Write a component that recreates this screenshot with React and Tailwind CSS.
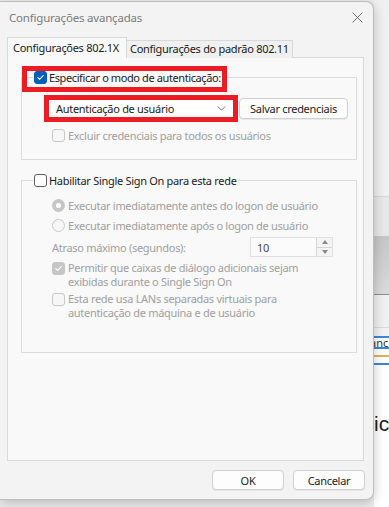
import { useState } from 'react'

const FONT = "font-['Noto_Sans','Open_Sans',sans-serif]"

export default function App() {
  const [auth, setAuth] = useState(true)
  const [sso, setSso] = useState(false)

  return (
    <div className={`relative w-[389px] h-[507px] overflow-hidden bg-[#ededed] flex items-start ${FONT} text-[11px] leading-[13px] tracking-[-0.3px] text-[#1b1b1b]`}>
      {/* Dialog */}
      <div className="mt-px w-[374px] h-[499px] shrink-0 flex flex-col bg-[#f3f3f3] border border-l-0 border-[#bdbdbd] rounded-r-[8px] shadow-[0_3px_12px_rgba(0,0,0,0.22)] relative z-10">
        {/* Title bar */}
        <div className="h-[35px] flex items-start pt-[9px] pl-[9px] pr-[10px] justify-between">
          <span className="text-[11.5px] tracking-[-0.2px] text-[#7b7b7b] leading-[14px]">Configurações avançadas</span>
          <svg viewBox="0 0 10 10" className="w-[11px] h-[11px] mt-px" fill="none" stroke="#6e6e6e" strokeWidth="0.9">
            <path d="M0.5 0.5l9 9M9.5 0.5l-9 9" />
          </svg>
        </div>

        {/* Tabs */}
        <div className="pl-[7px] flex items-end h-[21px] -mb-px relative z-10 whitespace-nowrap">
          <div className="w-[120px] h-[21px] bg-[#f9f9f9] border border-b-0 border-[#d9d9d9] pl-[5px] pt-[3px]">
            Configurações 802.1X
          </div>
          <div className="w-[166px] h-[18px] bg-[#f0f0f0] border border-l-0 border-b-0 border-[#d9d9d9] pl-[3px] pt-[1px]">
            Configurações do padrão 802.11
          </div>
        </div>

        {/* Panel */}
        <div className="ml-[7px] w-[357px] h-[404px] bg-[#f9f9f9] border border-[#dadada] pl-[13px] whitespace-nowrap">
          {/* Group 1 */}
          <fieldset className="mt-[12px] w-[336px] border border-[#dcdcdc] pb-[17px]">
            <legend className="ml-[11px] px-px h-[14px] flex items-center gap-[2px] pr-[2px]">
              <Check checked={auth} onClick={() => setAuth(!auth)} />
              <span className="tracking-[-0.4px]">Especificar o modo de autenticação:</span>
            </legend>
            <div className="mt-[14px] ml-[27px] h-[21px] flex items-center">
              <div className="w-[184px] h-[18px] bg-white flex items-center justify-between pl-[7px] pr-[7px]">
                <span>Autenticação de usuário</span>
                <svg viewBox="0 0 10 6" className="w-[9px] h-[5px]" fill="none" stroke="#555" strokeWidth="1">
                  <path d="M0.5 0.5l4.5 4.5 4.5-4.5" />
                </svg>
              </div>
              <Button className="ml-[6px] w-[109px] h-[21px]">Salvar credenciais</Button>
            </div>
            <div className="mt-[10px] ml-[30px] flex items-center gap-[3px]">
              <Check disabled />
              <span className="text-[#a0a0a0]">Excluir credenciais para todos os usuários</span>
            </div>
          </fieldset>

          {/* Group 2 */}
          <fieldset className="mt-[13px] w-[336px] border border-[#dcdcdc] pb-[32px]">
            <legend className="ml-[11px] px-px h-[14px] flex items-center gap-[2px] pr-[2px]">
              <Check checked={sso} onClick={() => setSso(!sso)} />
              <span>Habilitar Single Sign On para esta rede</span>
            </legend>
            <div className="ml-[30px] text-[#a0a0a0]">
              <div className="mt-[12px] h-[13px] flex items-center gap-[3px]">
                <Radio on />
                <span>Executar imediatamente antes do logon de usuário</span>
              </div>
              <div className="mt-[7px] h-[13px] flex items-center gap-[3px]">
                <Radio />
                <span>Executar imediatamente após o logon de usuário</span>
              </div>
              <div className="mt-[5px] h-[20px] flex items-center">
                <span className="w-[198px]">Atraso máximo (segundos):</span>
                <div className="w-[83px] h-[20px] border border-[#e0e0e0] bg-[#fbfbfb] flex items-center justify-between">
                  <span className="pl-[6px] text-[#4a4a4a]">10</span>
                  <div className="w-[16px] h-full border-l border-[#d6d6d6] flex flex-col">
                    <div className="flex-1 flex items-center justify-center border-b border-[#d6d6d6] bg-[#f4f4f4]">
                      <div className="w-0 h-0 border-x-[3.5px] border-x-transparent border-b-[4px] border-b-[#8a8a8a]" />
                    </div>
                    <div className="flex-1 flex items-center justify-center bg-[#f4f4f4]">
                      <div className="w-0 h-0 border-x-[3.5px] border-x-transparent border-t-[4px] border-t-[#8a8a8a]" />
                    </div>
                  </div>
                </div>
              </div>
              <div className="mt-[5px] flex items-start gap-[3px]">
                <Check disabled checked />
                <span className="leading-[14px] -mt-px">Permitir que caixas de diálogo adicionais sejam<br />exibidas durante o Single Sign On</span>
              </div>
              <div className="mt-[4px] flex items-start gap-[3px]">
                <Check disabled />
                <span className="leading-[14px] -mt-px">Esta rede usa LANs separadas virtuais para<br />autenticação de máquina e de usuário</span>
              </div>
            </div>
          </fieldset>
        </div>

        {/* Footer */}
        <div className="mt-[9px] pr-[8px] flex justify-end gap-[9px]">
          <Button className="w-[72px] h-[20px]">OK</Button>
          <Button className="w-[72px] h-[20px]">Cancelar</Button>
        </div>
      </div>

      {/* Red annotation boxes */}
      <div className="absolute left-[22px] top-[66px] w-[205px] h-[26px] border-[5px] border-[#ed1c24] z-20 pointer-events-none" />
      <div className="absolute left-[44px] top-[95px] w-[194px] h-[27px] border-[5px] border-[#ed1c24] z-20 pointer-events-none" />

      {/* Window behind, right edge */}
      <div className="flex-1 h-full flex flex-col text-[#333] overflow-hidden tracking-normal">
        <div className="h-[197px] bg-[#f0f0f0] border-b border-[#d6d6d6]" />
        <div className="h-[40px] bg-[#e8e8e8] border-b border-[#c9c9c9]" />
        <div className="h-[58px] bg-gradient-to-b from-[#c6c6c6] to-[#dadada] border-b border-[#8e8e8e]" />
        <div className="h-[33px] bg-[#f0f0f0] border-b border-[#d8d8d8]" />
        <div className="h-[10px] bg-[#f2f2f2] border-b-2 border-[#3b86d6]" />
        <div className="h-[9px] bg-white text-[11px] leading-[9px] whitespace-nowrap -ml-[4px]">anc</div>
        <div className="h-[8px] bg-white border-t-2 border-[#3b86d6]" />
        <div className="h-[8px] bg-white border-t-2 border-[#d9b45a]" />
        <div className="h-[2px] bg-[#3b86d6]" />
        <div className="h-[48px] bg-white" />
        <div className="h-[22px] bg-white text-[21px] leading-[22px] font-['Liberation_Sans',sans-serif] text-[#222] whitespace-nowrap">ic</div>
        <div className="flex-1 bg-white" />
      </div>
    </div>
  )
}

function Check({ checked, disabled, onClick }) {
  let cls = 'border border-[#5c5c5c] bg-white'
  if (checked && !disabled) cls = 'bg-[#005fb8] border border-[#005fb8]'
  else if (checked && disabled) cls = 'bg-[#c6c6c6] border border-[#c6c6c6]'
  else if (disabled) cls = 'border border-[#c8c8c8] bg-[#f6f6f6]'
  return (
    <button onClick={onClick} className={`w-[13px] h-[13px] shrink-0 rounded-[3px] flex items-center justify-center ${cls}`}>
      {checked && (
        <svg viewBox="0 0 10 10" className="w-[9px] h-[9px]" fill="none" stroke="white" strokeWidth="1.2" strokeLinecap="round" strokeLinejoin="round">
          <path d="M2 5.2l2 2 4-4.4" />
        </svg>
      )}
    </button>
  )
}

function Radio({ on }) {
  return on ? (
    <div className="w-[13px] h-[13px] shrink-0 rounded-full bg-[#c6c6c6] flex items-center justify-center">
      <div className="w-[5px] h-[5px] rounded-full bg-white" />
    </div>
  ) : (
    <div className="w-[13px] h-[13px] shrink-0 rounded-full border border-[#c8c8c8] bg-[#f6f6f6]" />
  )
}

function Button({ children, className }) {
  return (
    <button className={`rounded-[4px] border border-[#d0d0d0] bg-[#fdfdfd] flex items-center justify-center shadow-[0_1px_0_rgba(0,0,0,0.06)] ${className}`}>
      {children}
    </button>
  )
}
